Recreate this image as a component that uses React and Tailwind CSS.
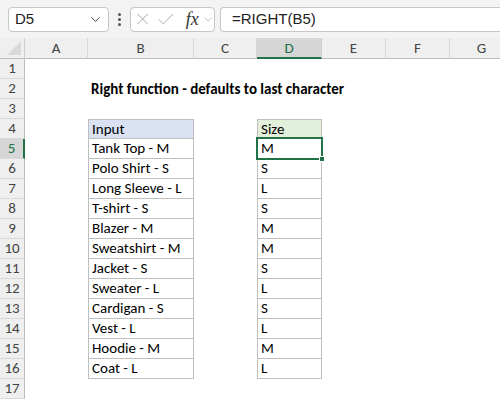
import { ChevronDown } from 'lucide-react';

const COLS = ['A', 'B', 'C', 'D', 'E', 'F', 'G'];
const WIDTHS = [63, 106, 63, 65, 64, 64, 64];

const ITEMS = [
    ['Tank Top - M', 'M'],
    ['Polo Shirt - S', 'S'],
    ['Long Sleeve - L', 'L'],
    ['T-shirt - S', 'S'],
    ['Blazer - M', 'M'],
    ['Sweatshirt - M', 'M'],
    ['Jacket - S', 'S'],
    ['Sweater - L', 'L'],
    ['Cardigan - S', 'S'],
    ['Vest - L', 'L'],
    ['Hoodie - M', 'M'],
    ['Coat - L', 'L'],
];

function Cell({ children, className = '' }) {
    return <div className={`h-5 flex items-center overflow-visible whitespace-nowrap ${className}`}>{children}</div>;
}

function rowContent(r) {
    // returns an array of 7 cells for row r
    const cells = COLS.map((c) => <Cell key={c} />);
    if (r === 2) {
        cells[1] = (
            <Cell key="B" className="pl-[3px] font-bold text-black">
                Right function - defaults to last character
            </Cell>
        );
    }
    if (r === 4) {
        cells[1] = (
            <Cell key="B" className="pl-[3px] bg-[#d9e1f2] border border-[#bfbfbf]">Input</Cell>
        );
        cells[3] = (
            <Cell key="D" className="pl-[3px] bg-[#e2efda] border border-[#bfbfbf]">Size</Cell>
        );
    }
    if (r >= 5 && r <= 16) {
        const [input, size] = ITEMS[r - 5];
        cells[1] = (
            <Cell key="B" className="pl-[3px] border-x border-b border-[#bfbfbf]">{input}</Cell>
        );
        cells[3] =
            r === 5 ? (
                <div key="D" className="h-5 relative border-x border-b border-[#bfbfbf]">
                    <div className="absolute -left-[2px] -top-[2px] -right-[2px] -bottom-[2px] border-2 border-[#217346] flex items-center pl-[3px] z-10">
                        {size}
                    </div>
                    <div className="absolute -right-[4px] -bottom-[4px] w-[6px] h-[6px] bg-[#217346] border border-white z-20" />
                </div>
            ) : (
                <Cell key="D" className="pl-[3px] border-x border-b border-[#bfbfbf]">{size}</Cell>
            );
    }
    return cells;
}

export default function App() {
    const rows = Array.from({ length: 17 }, (_, i) => i + 1);
    return (
        <div
            className="w-[500px] h-[400px] overflow-hidden bg-white text-[#000] text-[15px]"
            style={{ fontFamily: 'Carlito, "Open Sans", sans-serif' }}
        >
            {/* Formula bar */}
            <div className="h-[38px] bg-[#f3f3f3] flex items-center pl-2 gap-0 relative">
                <div className="w-[101px] h-[25px] bg-white border border-[#c6c6c6] rounded-[4px] flex items-center justify-between pl-[6px] pr-[5px]">
                    <span className="text-[15px] text-[#222]" style={{ fontFamily: '"Liberation Sans", sans-serif' }}>D5</span>
                    <ChevronDown size={15} strokeWidth={1.6} className="text-[#444]" />
                </div>
                <div className="w-[21px] flex flex-col items-center gap-[2px]">
                    <div className="w-[3px] h-[3px] bg-[#555] rounded-full" />
                    <div className="w-[3px] h-[3px] bg-[#555] rounded-full" />
                    <div className="w-[3px] h-[3px] bg-[#555] rounded-full" />
                </div>
                <div className="w-[85px] h-[25px] bg-white border border-[#c6c6c6] rounded-[4px] flex items-center pl-[6px]">
                    <svg width="12" height="12" viewBox="0 0 12 12" fill="none" stroke="#c0c0c0" strokeWidth="1.1">
                        <path d="M0.5 0.5 L11.5 11.5 M11.5 0.5 L0.5 11.5" />
                    </svg>
                    <svg width="16" height="12" viewBox="0 0 16 12" fill="none" stroke="#c0c0c0" strokeWidth="1.1" className="ml-[10px]">
                        <path d="M0.5 6 L5.5 11 L15.5 1" />
                    </svg>
                    <span className="ml-[12px] italic text-[18px] leading-none text-[#333]" style={{ fontFamily: '"Liberation Serif", serif' }}>fx</span>
                    <ChevronDown size={13} strokeWidth={1.3} className="text-[#999] ml-[3px]" />
                </div>
                <div className="ml-[5px] flex-1 h-[25px] bg-white border border-[#c6c6c6] border-r-0 rounded-l-[4px] flex items-center pl-[11px] text-[15px] text-[#222]" style={{ fontFamily: '"Liberation Sans", sans-serif' }}>
                    =RIGHT(B5)
                </div>
            </div>

            {/* Sheet */}
            <div
                className="grid"
                style={{ gridTemplateColumns: `25px ${WIDTHS.map((w) => w + 'px').join(' ')}` }}
            >
                {/* column header row */}
                <div className="h-[21px] bg-[#efefef] border-b border-[#bcbcbc] border-r border-r-[#d0d0d0] relative">
                    <div
                        className="absolute right-[3px] bottom-[3px] w-0 h-0 border-l-[14px] border-l-transparent border-b-[14px] border-b-[#d9d9d9]"
                    />
                </div>
                {COLS.map((c) =>
                    c === 'D' ? (
                        <div
                            key={c}
                            className="h-[21px] bg-[#d6d6d6] border-b-2 border-[#217346] border-r border-r-[#d0d0d0] flex items-center justify-center text-[#217346] pt-[2px]"
                        >
                            {c}
                        </div>
                    ) : (
                        <div
                            key={c}
                            className="h-[21px] bg-[#efefef] border-b border-[#bcbcbc] border-r border-r-[#d9d9d9] flex items-center justify-center text-[#444] pt-[1px]"
                        >
                            {c}
                        </div>
                    )
                )}

                {rows.map((r) => [
                    <div
                        key={`h${r}`}
                        className={`h-5 border-b border-[#d9d9d9] flex items-center justify-center ${
                            r === 5
                                ? 'bg-[#d6d6d6] text-[#217346] border-r-2 border-r-[#217346]'
                                : 'bg-[#efefef] text-[#444] border-r border-r-[#bcbcbc]'
                        }`}
                    >
                        {r}
                    </div>,
                    ...rowContent(r).map((cell, i) => <div key={`${r}-${i}`} className="h-5">{cell}</div>),
                ])}
            </div>
        </div>
    );
}
